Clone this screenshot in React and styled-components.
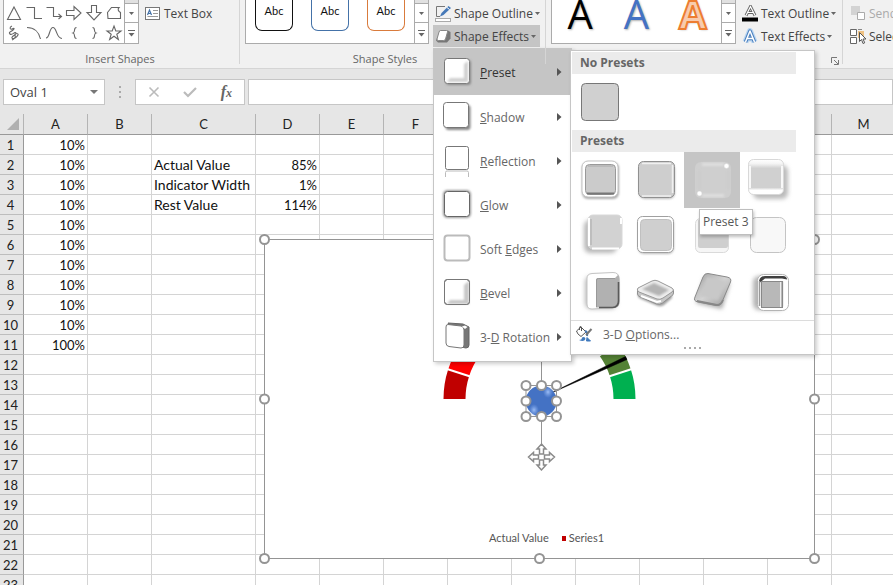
import React from "react";
import styled, { createGlobalStyle, css } from "styled-components";

const UI_FONT = '"Open Sans", "Noto Sans", sans-serif';
const CELL_FONT = 'Lato, "Open Sans", sans-serif';

const GlobalStyle = createGlobalStyle`
  *, *::before, *::after { box-sizing: border-box; }
  html, body, #root { height: 100%; }
  body { margin: 0; overflow: hidden; background: #fff; font-family: ${UI_FONT}; font-size: 12px; color: #444; }
  button, input { font: inherit; color: inherit; }
  button { margin: 0; padding: 0; border: 0; background: none; }
  svg { display: block; flex: none; }
`;

const Window = styled.div`
  height: 100%;
  display: flex;
  flex-direction: column;
  overflow: hidden;
`;

/* ---------- ribbon ---------- */
const Ribbon = styled.header`
  position: relative;
  z-index: 10;
  flex: none;
  display: flex;
  height: 69px;
  background: #f1f1f1;
  border-bottom: 1px solid #d5d5d5;
`;

const Group = styled.section`
  flex: none;
  position: relative;
  display: flex;
  flex-direction: column;
  padding: 0 ${(p) => p.$right ?? 6}px 0 ${(p) => p.$left ?? 5}px;

  &::after {
    content: "";
    position: absolute;
    right: 0;
    top: 0;
    height: 64px;
    width: 1px;
    background: #d5d5d5;
  }
`;

const GroupBody = styled.div`
  display: flex;
  height: 51px;
  gap: 4px;
`;

const GroupLabel = styled.div`
  position: relative;
  display: flex;
  justify-content: center;
  padding-right: ${(p) => p.$shift ?? 0}px;
  line-height: 18px;
  font-size: 11px;
  color: #666;
`;

const Launcher = styled.button`
  position: absolute;
  right: 4px;
  top: 6px;
`;

const Gallery = styled.div`
  display: flex;
  height: 44px;
  background: #fff;
  border: solid #ababab;
  border-width: 0 1px 1px 1px;
`;

const ShapeGrid = styled.div`
  display: grid;
  grid-template-columns: repeat(6, 20px);
  grid-auto-rows: 20px;
  padding-top: 3px;
`;

const StyleRow = styled.div`
  display: flex;
  gap: 18px;
  padding: 0 9px;
`;

const StyleTile = styled.button`
  width: 38px;
  height: 31px;
  padding-bottom: 9px;
  font-family: ${CELL_FONT};
  font-size: 11px;
  color: #111;
  background: #fff;
  border: solid ${(p) => p.$line};
  border-width: 0 1px 1px 1px;
  border-radius: 0 0 7px 7px;
`;

const ArtRow = styled.div`
  display: flex;
  width: 169px;
  justify-content: space-around;
`;

const IconButton = styled.button`
  display: grid;
  place-items: center;
`;

const Scroller = styled.div`
  display: flex;
  flex-direction: column;
  width: 14px;
  border-left: 1px solid #ababab;
`;

const ScrollButton = styled.button`
  display: grid;
  place-items: center;
  height: ${(p) => p.$h}px;
  background: ${(p) => (p.$off ? "#e1e1e1" : "#fff")};
  border-bottom: ${(p) => (p.$last ? 0 : 1)}px solid #ababab;
`;

const Commands = styled.div`
  position: relative;
  display: flex;
  flex-direction: column;
  align-items: flex-start;
  width: ${(p) => (p.$w ? p.$w + "px" : "auto")};
  padding-top: 2px;
  gap: 1px;
`;

const Command = styled.button`
  display: flex;
  align-items: center;
  gap: ${(p) => p.$gap ?? 4}px;
  height: 22px;
  padding: 0 4px 0 2px;
  white-space: nowrap;
  font-size: 12px;
  color: ${(p) => (p.disabled ? "#aaa" : "#444")};
  background: ${(p) => (p.$open ? "#c5c5c5" : "transparent")};
`;

const ArrangeGroup = styled.section`
  flex: 1;
  min-width: 0;
  overflow: hidden;
  padding-left: 5px;
`;

/* ---------- formula bar ---------- */
const FormulaBar = styled.div`
  flex: none;
  display: flex;
  align-items: stretch;
  height: 45px;
  padding: 10px 0 9px 3px;
  background: #e6e6e6;
`;

const BarBox = styled.div`
  display: flex;
  align-items: center;
  justify-content: space-between;
  width: ${(p) => (p.$w ? p.$w + "px" : "auto")};
  flex: ${(p) => (p.$w ? "none" : 1)};
  min-width: 0;
  background: #fff;
  border: 1px solid #c6c6c6;
  padding: 0 ${(p) => p.$pad ?? 6}px;
`;

const NameInput = styled.input`
  width: 70px;
  border: 0;
  padding: 0;
  outline: 0;
  background: none;
  font-size: 13px;
`;

const FormulaInput = styled(NameInput)`
  width: 100%;
`;

const FxButton = styled.button`
  font-family: "Liberation Serif", serif;
  font-style: italic;
  font-weight: 700;
  font-size: 16px;
  line-height: 16px;
  color: #666;

  sub { font-size: 12px; line-height: 0; vertical-align: baseline; }
`;

const Grip = styled.div`
  display: grid;
  place-items: center;
  width: 30px;
`;

const Spacer = styled.div`
  width: 3px;
`;

/* ---------- worksheet ---------- */
const Sheet = styled.main`
  position: relative;
  flex: 1;
  min-height: 0;
  overflow: hidden;
`;

const Grid = styled.table`
  table-layout: fixed;
  width: 1152px;
  border-collapse: separate;
  border-spacing: 0;
  font-family: ${CELL_FONT};
  font-size: 13px;
  line-height: 18px;
  color: #111;
`;

const Col = styled.col`
  width: ${(p) => p.$w}px;
`;

const ColHead = styled.th`
  height: 21px;
  padding: 0;
  font-weight: 400;
  color: #222;
  border-right: 1px solid #b4b4b4;
  border-bottom: 1px solid #999;
  background: #e6e6e6;
`;

const Corner = styled(ColHead)`
  padding: 0 4px 0 7px;
`;

const RowHead = styled.th`
  height: 20px;
  padding: 0 2px 0 0;
  font-weight: 400;
  color: #222;
  background: #e6e6e6;
  border-right: 1px solid #999;
  border-bottom: 1px solid #bdbdbd;
`;

const Cell = styled.td`
  height: 20px;
  padding: 0 2px;
  text-align: ${(p) => (p.$num ? "right" : "left")};
  font-size: ${(p) => (p.$num ? 13 : 14)}px;
  white-space: nowrap;
  border-right: 1px solid #d4d4d4;
  border-bottom: 1px solid #d4d4d4;
`;

/* Floating chart object, anchored on the sheet's free canvas */
const ChartObject = styled.figure`
  position: absolute;
  left: 264px;
  top: 125px;
  width: 551px;
  height: 320px;
  margin: 0;
  display: flex;
  flex-direction: column;
  justify-content: flex-end;
  background: #fff;
`;

const ChartDrawing = styled.svg`
  position: absolute;
  inset: 0;
  overflow: visible;
`;

const Legend = styled.figcaption`
  display: flex;
  justify-content: center;
  align-items: center;
  gap: 13px;
  padding: 0 0 13px 14px;
  font-family: ${CELL_FONT};
  font-size: 11px;
  line-height: 16px;
  color: #555;
`;

const LegendEntry = styled.span`
  display: flex;
  align-items: center;
  gap: 3px;
`;

const LegendKey = styled.i`
  width: 4px;
  height: 5px;
  background: #c00000;
`;

/* ---------- menus ---------- */
const popup = css`
  position: absolute;
  background: #fff;
  border: 1px solid #c6c6c6;
  box-shadow: 2px 2px 4px rgba(0, 0, 0, 0.2);
`;

const EffectsMenu = styled.div`
  ${popup}
  left: 0;
  top: 48px;
  width: 139px;
  padding-bottom: 2px;
`;

const MenuItem = styled.button`
  display: flex;
  align-items: center;
  width: 100%;
  height: ${(p) => (p.$active ? 46 : 44)}px;
  padding: 0 9px 0 7px;
  gap: 6px;
  text-align: left;
  white-space: nowrap;
  color: ${(p) => (p.$active ? "#333" : "#666")};
  background: ${(p) => (p.$active ? "#c5c5c5" : "#fff")};

  span { flex: 1; }
`;

const PresetPanel = styled.div`
  ${popup}
  left: 137px;
  top: 50px;
  width: 245px;
  padding-top: 1px;
`;

const PanelHeading = styled.h3`
  margin: 0 18px 0 1px;
  padding-left: 8px;
  font-size: 12px;
  line-height: 22px;
  font-weight: 700;
  color: #666;
  background: #ebebeb;
`;

const Swatches = styled.div`
  display: grid;
  grid-template-columns: repeat(4, 56px);
  grid-auto-rows: 56px;
  padding-left: 1px;
`;

const SwatchCell = styled.button`
  background: ${(p) => (p.$hot ? "#c5c5c5" : "transparent")};
`;

const PanelFooter = styled.button`
  display: flex;
  align-items: center;
  gap: 10px;
  width: 100%;
  height: 27px;
  padding-left: 4px;
  color: #666;
  border-top: 1px solid #dcdcdc;
`;

const PanelGrip = styled.div`
  display: flex;
  justify-content: center;
  height: 7px;
`;

const Tooltip = styled.div`
  position: absolute;
  left: 128px;
  top: 158px;
  padding: 0 3px;
  font-size: 12px;
  line-height: 24px;
  white-space: nowrap;
  color: #575757;
  background: #fff;
  border: 1px solid #bebebe;
  box-shadow: 1px 2px 3px rgba(0, 0, 0, 0.25);
`;

/* ---------- small drawings ---------- */
const Down = () => (
  <svg width="5" height="3"><path d="M0 0h5L2.500 3z" fill="#666" /></svg>
);
const MoreDown = () => (
  <svg width="7" height="7"><path d="M0 .5h7" stroke="#666" /><path d="M.5 3h6L3.500 6.500z" fill="#666" /></svg>
);
const Right = () => (
  <svg width="5" height="8"><path d="M0 0l4.500 4L0 8z" fill="#555" /></svg>
);

const shapePaths = [
  ["Triangle", "M10 4L16.500 16.500H3.500z"],
  ["Elbow connector", "M2.500 4.500H10.500V15.500H18"],
  ["Elbow arrow connector", "M2.500 4.500H9.500V13.500H17M14.500 11l3 2.500-3 2.500"],
  ["Right arrow", "M2.500 7.500H10V3.500l7 6.500-7 6.500V12.500H2.500z"],
  ["Down arrow", "M7.500 2.500H12.500V9.500H17L10 17 3 9.500H7.500z"],
  ["Freeform", "M3.500 9.500L7.500 4.500H15C13.500 6 14 8 16.500 9.500V15.500H4z"],
  ["Scribble", "M8 3C5 4 6 7 8 6s3-1 1 1-5 2-3 4 5-3 6-1-5 3-4 5 5-1 6-3-4-2-3 0-1 4-3 5"],
  ["Arc", "M3 4.500C10 4.500 15 9 16.500 16"],
  ["Curve", "M2 15C6 15 5 4.500 9 4.500S12 15.500 18 15.500"],
  ["Left brace", "M12.500 4.500C9 4.500 12 9 9 10 12 11 9 15.500 12.500 15.500"],
  ["Right brace", "M8.500 4.500C12 4.500 9 9 12 10 9 11 12 15.500 8.500 15.500"],
  ["Star", "M10 3l1.800 5H17l-4.200 3.200 1.600 5.300L10 13.300l-4.400 3.200 1.600-5.300L3 8h5.200z"],
];

const TextBoxIcon = () => (
  <svg width="16" height="13" fill="none">
    <rect x=".5" y=".5" width="14" height="12" fill="#fff" stroke="#777" />
    <path d="M2.500 8L4.500 3l2 5M3.200 6.500h2.600" stroke="#4472a8" strokeWidth="1.200" />
    <path d="M8 3.500h5M8 6.500h5M2.500 9.500h10.500" stroke="#999" />
  </svg>
);
const OutlineIcon = () => (
  <svg width="17" height="17" fill="none">
    <path d="M10 1.500H1.500V11.500H5" stroke="#777" />
    <path d="M5 11.500L6.500 8 13.500 1l2.500 2L8.500 10z" fill="#4679b8" />
    <path d="M12 2.500l2.500 2" stroke="#fff" />
    <rect x=".5" y="13.500" width="15" height="3" fill="#fff" stroke="#aaa" />
  </svg>
);
const EffectsIcon = () => (
  <svg width="17" height="15">
    <path d="M5 1.500H13L15.500 3v6.500L12 13.500H3L1 11.500z" fill="#777" />
    <path d="M5.500 1.500h6Q13 1.500 12.500 3l-2 7q-.5 1.500-2 1.500h-5Q1.500 11.500 2 10L4 3Q4.500 1.500 5.500 1.500z" fill="#fff" stroke="#888" />
  </svg>
);
const TextOutlineIcon = () => (
  <svg width="17" height="17" fill="none">
    <path d="M4 10.500L8.500 1.500 13 10.500M5.800 7.500h5.400" stroke="#666" strokeWidth="3" />
    <path d="M4 10.500L8.500 1.500 13 10.500M5.800 7.500h5.400" stroke="#fff" strokeWidth="1.200" />
    <path d="M0 12.500h16v4H0z" fill="#000" />
  </svg>
);
const TextEffectsIcon = () => (
  <svg width="17" height="17" fill="none" strokeLinejoin="round">
    <path d="M3.500 14L8 3 12.500 14M5 10.500h6" stroke="#b9d6f2" strokeWidth="6" />
    <path d="M3.500 14L8 3 12.500 14M5 10.500h6" stroke="#4a7fbd" strokeWidth="3.500" />
    <path d="M3.500 14L8 3 12.500 14M5 10.500h6" stroke="#fff" strokeWidth="1.500" />
  </svg>
);
const SendIcon = () => (
  <svg width="16" height="16" fill="none">
    <path d="M1 1h9v9H1z" fill="#d3d3d3" />
    <path d="M7.500 7.500h7v7h-7z" fill="#fff" stroke="#aaa" />
  </svg>
);
const SelectIcon = () => (
  <svg width="17" height="17" fill="none">
    <path d="M8 3h6v7H8z" fill="#f0c283" />
    <path d="M.5 1.500h6v6h-6zM.5 9.500h6v6h-6z" fill="#fff" stroke="#666" />
    <path d="M8 1.500h4" stroke="#888" />
    <path d="M9.500 4.500v9l2-2 1.500 4 1.700-.7L13 11h3z" fill="#fff" stroke="#555" />
  </svg>
);

/* WordArt samples in the gallery */
const artStyles = [
  { name: "Fill black", fill: "#000", stroke: "#000", w: 0 },
  { name: "Fill blue", fill: "#4472c4", stroke: "#4472c4", w: 0 },
  { name: "Fill orange, outline", fill: "#f8cbad", stroke: "#ed7d31", w: 2 },
];
const ArtTile = styled.button`
  width: 44px;
  height: 43px;
  font-family: ${UI_FONT};
  font-size: 40px;
  line-height: 28px;
  padding-bottom: 17px;
  font-weight: ${(p) => (p.$w ? 700 : 400)};
  color: ${(p) => p.$fill};
  -webkit-text-stroke: ${(p) => p.$w}px ${(p) => p.$stroke};
  text-shadow: 1px 1px 2px rgba(0, 0, 0, 0.3);
`;

/* ---------- effect menu icons ---------- */
const box = { x: 3.5, y: 3.5, width: 25, height: 25, rx: 3, fill: "#fff", stroke: "#777" };
const effectIcons = {
  preset: (
    <>
      <rect {...box} x="5" y="5" fill="#888" stroke="none" filter="url(#soft)" />
      <rect {...box} />
      <path d="M27 6v21H6l3-4h14V9z" fill="#d0d0d0" filter="url(#soft)" />
    </>
  ),
  shadow: (
    <>
      <rect {...box} x="4.500" y="5" fill="#888" stroke="none" filter="url(#soft)" />
      <rect {...box} x="2.500" y="2.500" />
    </>
  ),
  reflection: (
    <>
      <rect {...box} x="4.500" y="2.500" width="23" height="23" rx="2" />
      <path d="M4.500 33V28.500q0-1.500 1.500-1.500H26q1.500 0 1.500 1.500V33" fill="none" stroke="#bbb" />
    </>
  ),
  glow: (
    <>
      <rect {...box} strokeWidth="3" stroke="#999" filter="url(#soft)" />
      <rect {...box} stroke="#666" />
    </>
  ),
  soft: <rect {...box} strokeWidth="2" stroke="#bbb" filter="url(#faint)" />,
  bevel: (
    <>
      <rect {...box} />
      <path d="M28 5v23H6l3-4h14V9z" fill="#c8c8c8" filter="url(#soft)" />
      <rect {...box} fill="none" />
    </>
  ),
  rotation: (
    <>
      <path d="M7 3L22 4l6 3v18q0 3-3 3l-5-1z" fill="#777" stroke="#666" />
      <path d="M7 4.500L20 6q3 .5 3 4v15q0 3-3 3L8 26.500q-3-.5-3-3.500V7q0-2.700 2-2.500z" fill="#fff" stroke="#777" />
      <path d="M21 6.500l3-1 2.500 1.500-2.500 2z" fill="#fff" />
    </>
  ),
};
const menuItems = [
  { icon: "preset", label: <><u>P</u>reset</>, active: true },
  { icon: "shadow", label: <><u>S</u>hadow</> },
  { icon: "reflection", label: <><u>R</u>eflection</> },
  { icon: "glow", label: <><u>G</u>low</> },
  { icon: "soft", label: <>Soft <u>E</u>dges</> },
  { icon: "bevel", label: <><u>B</u>evel</> },
  { icon: "rotation", label: <>3-<u>D</u> Rotation</> },
];

const SharedDefs = () => (
  <svg width="0" height="0" aria-hidden="true">
    <defs>
      <filter id="faint" filterUnits="userSpaceOnUse" x="-5" y="-5" width="70" height="70"><feGaussianBlur stdDeviation=".5" /></filter>
      <filter id="soft" filterUnits="userSpaceOnUse" x="-5" y="-5" width="70" height="70"><feGaussianBlur stdDeviation="1" /></filter>
      <filter id="shade" filterUnits="userSpaceOnUse" x="-5" y="-5" width="70" height="70"><feGaussianBlur stdDeviation="2" /></filter>
      <linearGradient id="bands" x2="0" y2="1">
        <stop offset="0" stopColor="#fff" /><stop offset=".12" stopColor="#f4f4f4" />
        <stop offset=".25" stopColor="#d0d0d0" /><stop offset=".8" stopColor="#d0d0d0" /><stop offset=".88" stopColor="#fff" />
      </linearGradient>
      <linearGradient id="metal" x2="1" y2="1">
        <stop offset="0" stopColor="#a0a0a0" /><stop offset=".5" stopColor="#d3d3d3" /><stop offset="1" stopColor="#999" />
      </linearGradient>
      <radialGradient id="spot"><stop offset="0" stopColor="#fff" /><stop offset=".5" stopColor="#fff" /><stop offset="1" stopColor="#fff" stopOpacity="0" /></radialGradient>
      <radialGradient id="glint"><stop offset="0" stopColor="#9dbef5" /><stop offset="1" stopColor="#7ba3e8" stopOpacity="0" /></radialGradient>
    </defs>
  </svg>
);

/* ---------- the twelve preset samples ---------- */
const presets = [
  <>
    <rect x="10" y="10" width="37" height="37" rx="6" fill="#aaa" filter="url(#soft)" />
    <rect x="10" y="9" width="36" height="36" rx="6" fill="#fff" stroke="#c4c4c4" />
    <rect x="13.500" y="12.500" width="30" height="30" rx="4" fill="#cbcbcb" stroke="#999" />
    <path d="M15 41.500h27" stroke="#777" strokeWidth="2" filter="url(#faint)" />
    <path d="M16 14h25" stroke="#aaa" />
  </>,
  <>
    <rect x="11" y="11" width="36" height="36" rx="6" fill="#bbb" filter="url(#soft)" />
    <rect x="10.500" y="9.500" width="36" height="36" rx="5" fill="#cecece" stroke="#909090" />
    <path d="M14 11.500h29M44.500 13v28M14 44h29" stroke="#f0f0f0" strokeWidth="1.500" filter="url(#faint)" />
  </>,
  <>
    <rect x="11" y="10" width="36" height="36" rx="6" fill="#cfcfcf" filter="url(#faint)" />
    <path d="M18 12.500h22M18 43.500h22" stroke="#dedede" strokeWidth="3" filter="url(#soft)" />
    <path d="M15 18v20M44 18v20" stroke="#c8c8c8" filter="url(#soft)" />
    <circle cx="42.500" cy="14" r="3" fill="url(#spot)" />
    <circle cx="15.500" cy="41.500" r="3" fill="url(#spot)" />
  </>,
  <>
    <rect x="13" y="13" width="35" height="34" rx="6" fill="#bbb" filter="url(#shade)" />
    <rect x="8.500" y="7.500" width="35" height="35" rx="5" fill="url(#bands)" stroke="#d8d8d8" />
    <path d="M10 14v22M42 14v22" stroke="#f8f8f8" strokeWidth="2" filter="url(#faint)" />
  </>,
  <>
    <rect x="12" y="12" width="33" height="33" rx="6" fill="#b8b8b8" filter="url(#shade)" />
    <rect x="16" y="7" width="34" height="34" rx="5" fill="#d2d2d2" stroke="#d8d8d8" />
    <path d="M17 10v28M49 10v6M20 40.500h27" stroke="#fff" strokeWidth="2" filter="url(#faint)" />
    <path d="M19 11v26" stroke="#aaa" filter="url(#faint)" />
  </>,
  <>
    <rect x="10" y="10" width="36" height="36" rx="6" fill="#bbb" filter="url(#soft)" />
    <rect x="9.500" y="8.500" width="36" height="36" rx="5" fill="#fff" stroke="#a0a0a0" />
    <rect x="12.500" y="11.500" width="31" height="31" rx="4" fill="#cfcfcf" stroke="#c0c0c0" />
  </>,
  <>
    <rect x="11.500" y="10.500" width="33" height="34" rx="5" fill="#f6f6f6" stroke="#dadada" />
    <rect x="14" y="11" width="30" height="29" rx="2" fill="#cfcfcf" filter="url(#faint)" />
  </>,
  <rect x="10.500" y="9.500" width="35" height="35" rx="6" fill="#f8f8f8" stroke="#c4c4c4" />,
  <>
    <rect x="13" y="12" width="32" height="33" rx="6" fill="#b8b8b8" filter="url(#shade)" />
    <path d="M20 9.500L41 8.500q6 0 6 6V38q0 5-5 5.500L20 45q-5 0-5-5V14q0-4 5-4.500z" fill="#fff" stroke="#c4c4c4" />
    <path d="M24 16q0-2 2-2H43l3-3q1.500 1 1.500 4V38q0 5-4 5.500H24z" fill="#b1b1b1" />
    <path d="M46.500 18V37q0 6-6 6.500H27" fill="none" stroke="#5a5a5a" strokeWidth="1.600" filter="url(#faint)" />
    <path d="M24.500 43V16q0-1.500 2-1.500H43" fill="none" stroke="#999" />
  </>,
  <>
    <path d="M10 28v4q0 2 3 3l17 7q3 1 6-1l8-7V27z" fill="#a0a0a0" filter="url(#soft)" />
    <path d="M9.500 25v5q0 2 3 3l16 7q3 1 6-1l9-7q2-1 2-3V26z" fill="#c7c7c7" stroke="#909090" />
    <path d="M10 24L24 17q3-1.500 6 0l14 7q3 2 0 4l-9 6q-3 2-6 1L11 28q-3-2-1-4z" fill="#eee" stroke="#999" />
    <path d="M14 25l12-6 15 7-10 6z" fill="#b4b4b4" filter="url(#soft)" />
    <path d="M13 32l16 6 4-1" stroke="#fff" fill="none" strokeWidth="2" filter="url(#faint)" />
  </>,
  <>
    <path d="M20 14l26 5-8 26-26-6z" fill="#aaa" filter="url(#shade)" />
    <path d="M24 9.500L43 13q5 1 3.500 5L38 38q-1.500 4-6 3.500L14 38q-5-1-3-5L19 13q1.500-4 5-3.500z" fill="url(#metal)" stroke="#8a8a8a" />
    <path d="M23 13l19 4-8 19-18-4z" fill="#c8c8c8" filter="url(#soft)" />
    <path d="M13 37l20 4q4 0 6-5" stroke="#888" strokeWidth="2" fill="none" filter="url(#faint)" />
  </>,
  <>
    <rect x="13" y="12" width="32" height="34" rx="6" fill="#b4b4b4" filter="url(#shade)" />
    <rect x="17.500" y="10.500" width="31" height="36" rx="6" fill="#fff" stroke="#b4b4b4" />
    <path d="M19 17q1-5 6-5h18q4 0 4 3.500l-5-1H25l-5 4z" fill="#3f3f3f" filter="url(#faint)" />
    <path d="M19.500 17v25" stroke="#999" strokeWidth="1.500" filter="url(#faint)" />
    <rect x="21.500" y="17.500" width="21" height="26" fill="#b8b8b8" stroke="#888" />
    <path d="M40.500 18v25M43.500 17.500v25" stroke="#f0f0f0" />
  </>,
];

const BucketIcon = () => (
  <svg width="18" height="18" fill="none">
    <path d="M1.500 6L6 2l5 5-5 4.500Q2 9 1.500 6zM4.500 5V2.500Q5 .5 6.500 2V6" fill="#fff" stroke="#555" />
    <path d="M10 6q3 1 2 5" stroke="#4679b8" strokeWidth="2" />
    <path d="M16.500 4L11 10" stroke="#777" strokeWidth="2" />
    <path d="M4 15q3 0 3-2.500Q10 11 10.500 14 9 17.500 4 15z" fill="#3f79bd" />
    <path d="M12 12.500l3.500 3.500h-4z" fill="#3f79bd" stroke="#3f79bd" />
  </svg>
);

/* ---------- worksheet data ---------- */
const columns = [..."ABCDEFGHIJKLMNOPQ"];
const cells = { C2: "Actual Value", D2: "85%", C3: "Indicator Width", D3: "1%", C4: "Rest Value", D4: "114%", A11: "100%" };
for (let r = 1; r <= 10; r++) cells["A" + r] = "10%";

/* Gauge segments: 18 degrees each, swept from the left */
const CX = 275.5, CY = 160, R = 96, INNER = 74;
const point = (deg, r) => `${CX + r * Math.cos((deg * Math.PI) / 180)} ${CY - r * Math.sin((deg * Math.PI) / 180)}`;
const segment = (from) =>
  `M${point(from, R)}A${R} ${R} 0 0 1 ${point(from - 18, R)}L${point(from - 18, INNER)}A${INNER} ${INNER} 0 0 0 ${point(from, INNER)}z`;
const gaugeColors = ["#c00000", "#ff0000", "#ff5a00", "#ff8c00", "#ffc000", "#ffff00", "#c9d900", "#ed7d31", "#548235", "#00b050"];

const Handle = ({ x, y }) => <circle cx={x} cy={y} r="4.500" fill="#fff" stroke="#949494" strokeWidth="2" />;
const frameHandles = [[0.5, 0.5], [275.5, 0.5], [550.5, 0.5], [0.5, 160], [550.5, 160], [0.5, 319.5], [275.5, 319.5], [550.5, 319.5]];
const ovalHandles = [[262, 146.5], [277.5, 146.5], [292.5, 146.5], [262, 162], [292.5, 162], [262, 177.5], [277.5, 177.5], [292.5, 177.5]];
const moveArrow = "M0-13l4.500 5H2v5h-4v-5h-2.500z";

function Chart() {
  return (
    <ChartObject>
      <ChartDrawing width="551" height="320">
        <rect x=".5" y=".5" width="550" height="319" fill="none" stroke="#949494" />
        {gaugeColors.map((c, i) => (
          <path key={c} d={segment(180 - i * 18)} fill={c} />
        ))}
        {gaugeColors.slice(1).map((c, i) => (
          <path key={c} d={`M${point(162 - i * 18, 72)}L${point(162 - i * 18, 98)}`} stroke="#fff" strokeWidth="2" />
        ))}
        <path d="M285 155L361.500 117.500l1.500 3z" fill="#000" stroke="#000" strokeWidth=".5" />
        <path d="M277.500 115V205" stroke="#949494" />
        <rect x="262" y="146.500" width="30.500" height="31" fill="none" stroke="#949494" />
        <circle cx="277.250" cy="162" r="15.500" fill="#4472c4" />
        <ellipse cx="284" cy="153" rx="5" ry="6" fill="url(#glint)" />
        <ellipse cx="270" cy="171" rx="5" ry="6" fill="url(#glint)" />
        {[...frameHandles, ...ovalHandles].map(([x, y]) => <Handle key={`${x},${y}`} x={x} y={y} />)}
        <g transform="translate(277.500 218)" fill="#fff" stroke="#8a8a8a" strokeWidth="1.500">
          {[0, 90, 180, 270].map((a) => <path key={a} d={moveArrow} transform={`rotate(${a})`} />)}
        </g>
      </ChartDrawing>
      <Legend>
        <span>Actual Value</span>
        <LegendEntry><LegendKey />Series1</LegendEntry>
      </Legend>
    </ChartObject>
  );
}

const GalleryScroll = () => (
  <Scroller>
    <ScrollButton $h={4} $off aria-label="Scroll up" />
    <ScrollButton $h={19} aria-label="Scroll down"><Down /></ScrollButton>
    <ScrollButton $h={20} $last aria-label="More"><MoreDown /></ScrollButton>
  </Scroller>
);

function EffectMenus() {
  return (
    <>
      <EffectsMenu role="menu">
        {menuItems.map((m) => (
          <MenuItem key={m.icon} role="menuitem" $active={m.active}>
            <svg width="33" height="34">{effectIcons[m.icon]}</svg>
            <span>{m.label}</span>
            <Right />
          </MenuItem>
        ))}
      </EffectsMenu>
      <PresetPanel>
        <PanelHeading>No Presets</PanelHeading>
        <Swatches>
          <SwatchCell aria-label="No preset">
            <svg width="56" height="56"><rect x="9.500" y="9.500" width="37" height="37" rx="4" fill="#d0d0d0" stroke="#777" /></svg>
          </SwatchCell>
        </Swatches>
        <PanelHeading>Presets</PanelHeading>
        <Swatches>
          {presets.map((art, i) => (
            <SwatchCell key={i} $hot={i === 2} aria-label={`Preset ${i + 1}`}>
              <svg width="56" height="56">{art}</svg>
            </SwatchCell>
          ))}
        </Swatches>
        <PanelFooter><BucketIcon /><span>3-D <u>O</u>ptions...</span></PanelFooter>
        <PanelGrip>
          <svg width="17" height="2"><path d="M0 1h2M5 1h2M10 1h2M15 1h2" stroke="#aaa" strokeWidth="2" /></svg>
        </PanelGrip>
        <Tooltip role="tooltip">Preset 3</Tooltip>
      </PresetPanel>
    </>
  );
}

export default function App() {
  return (
    <Window>
      <GlobalStyle />
      <Ribbon>
        <Group $left={3} $right={3}>
          <GroupBody>
            <Gallery>
              <ShapeGrid>
                {shapePaths.map(([name, d]) => (
                  <IconButton key={name} aria-label={name}>
                    <svg width="20" height="20"><path d={d} fill="none" stroke="#666" strokeWidth="1.100" /></svg>
                  </IconButton>
                ))}
              </ShapeGrid>
              <GalleryScroll />
            </Gallery>
            <Commands $w={94}><Command $gap={3}><TextBoxIcon />Text Box</Command></Commands>
          </GroupBody>
          <GroupLabel>Insert Shapes</GroupLabel>
        </Group>

        <Group>
          <GroupBody>
            <Gallery>
              <StyleRow>
                {["#111", "#4472a8", "#d97b3c"].map((c) => <StyleTile key={c} $line={c}>Abc</StyleTile>)}
              </StyleRow>
              <GalleryScroll />
            </Gallery>
            <Commands $w={107}>
              <Command $gap={2}><OutlineIcon />Shape Outline<Down /></Command>
              <Command $gap={2} $open aria-expanded="true"><EffectsIcon />Shape Effects<Down /></Command>
              <EffectMenus />
            </Commands>
          </GroupBody>
          <GroupLabel $shift={15}>Shape Styles</GroupLabel>
        </Group>

        <Group $right={0}>
          <GroupBody>
            <Gallery>
              <ArtRow>
                {artStyles.map((a) => (
                  <ArtTile key={a.name} aria-label={a.name} $fill={a.fill} $stroke={a.stroke} $w={a.w}>A</ArtTile>
                ))}
              </ArtRow>
              <GalleryScroll />
            </Gallery>
            <Commands $w={103}>
              <Command $gap={2}><TextOutlineIcon />Text Outline<Down /></Command>
              <Command $gap={2}><TextEffectsIcon />Text Effects<Down /></Command>
            </Commands>
          </GroupBody>
          <GroupLabel>
            <Launcher aria-label="Format text effects">
              <svg width="8" height="8" fill="none" stroke="#777"><path d="M.5 6V.5H6M3 3l4 4M7.500 3v4.500H3" /></svg>
            </Launcher>
          </GroupLabel>
        </Group>

        <ArrangeGroup>
          <Commands>
            <Command $gap={3} disabled><SendIcon />Send Backward</Command>
            <Command $gap={2}><SelectIcon />Selection Pane</Command>
          </Commands>
        </ArrangeGroup>
      </Ribbon>

      <FormulaBar>
        <BarBox $w={102}>
          <NameInput aria-label="Name Box" defaultValue="Oval 1" />
          <svg width="8" height="4"><path d="M0 0h8L4 4z" fill="#777" /></svg>
        </BarBox>
        <Grip><svg width="2" height="12"><path d="M1 0v2M1 5v2M1 10v2" stroke="#aaa" strokeWidth="2" /></svg></Grip>
        <BarBox $w={110} $pad={12}>
          <IconButton aria-label="Cancel"><svg width="12" height="12"><path d="M1.500 1.500l9 9M10.500 1.500l-9 9" stroke="#bbb" strokeWidth="1.600" /></svg></IconButton>
          <IconButton aria-label="Enter"><svg width="14" height="12" fill="none"><path d="M1 6l4 4L13 2" stroke="#bbb" strokeWidth="2.200" /></svg></IconButton>
          <FxButton aria-label="Insert Function">f<sub>x</sub></FxButton>
        </BarBox>
        <Spacer />
        <BarBox><FormulaInput aria-label="Formula" /></BarBox>
      </FormulaBar>

      <Sheet>
        <Grid>
          <colgroup>
            <Col $w={24} />
            {columns.map((c) => <Col key={c} $w={c === "C" ? 104 : 64} />)}
          </colgroup>
          <thead>
            <tr>
              <Corner><svg width="12" height="12"><path d="M12 0v12H0z" fill="#b0b0b0" /></svg></Corner>
              {columns.map((c) => <ColHead key={c} scope="col">{c}</ColHead>)}
            </tr>
          </thead>
          <tbody>
            {Array.from({ length: 40 }, (_, i) => i + 1).map((r) => (
              <tr key={r}>
                <RowHead scope="row">{r}</RowHead>
                {columns.map((c) => {
                  const value = cells[c + r];
                  return <Cell key={c} $num={value?.endsWith("%")}>{value}</Cell>;
                })}
              </tr>
            ))}
          </tbody>
        </Grid>
        <Chart />
      </Sheet>
      <SharedDefs />
    </Window>
  );
}
